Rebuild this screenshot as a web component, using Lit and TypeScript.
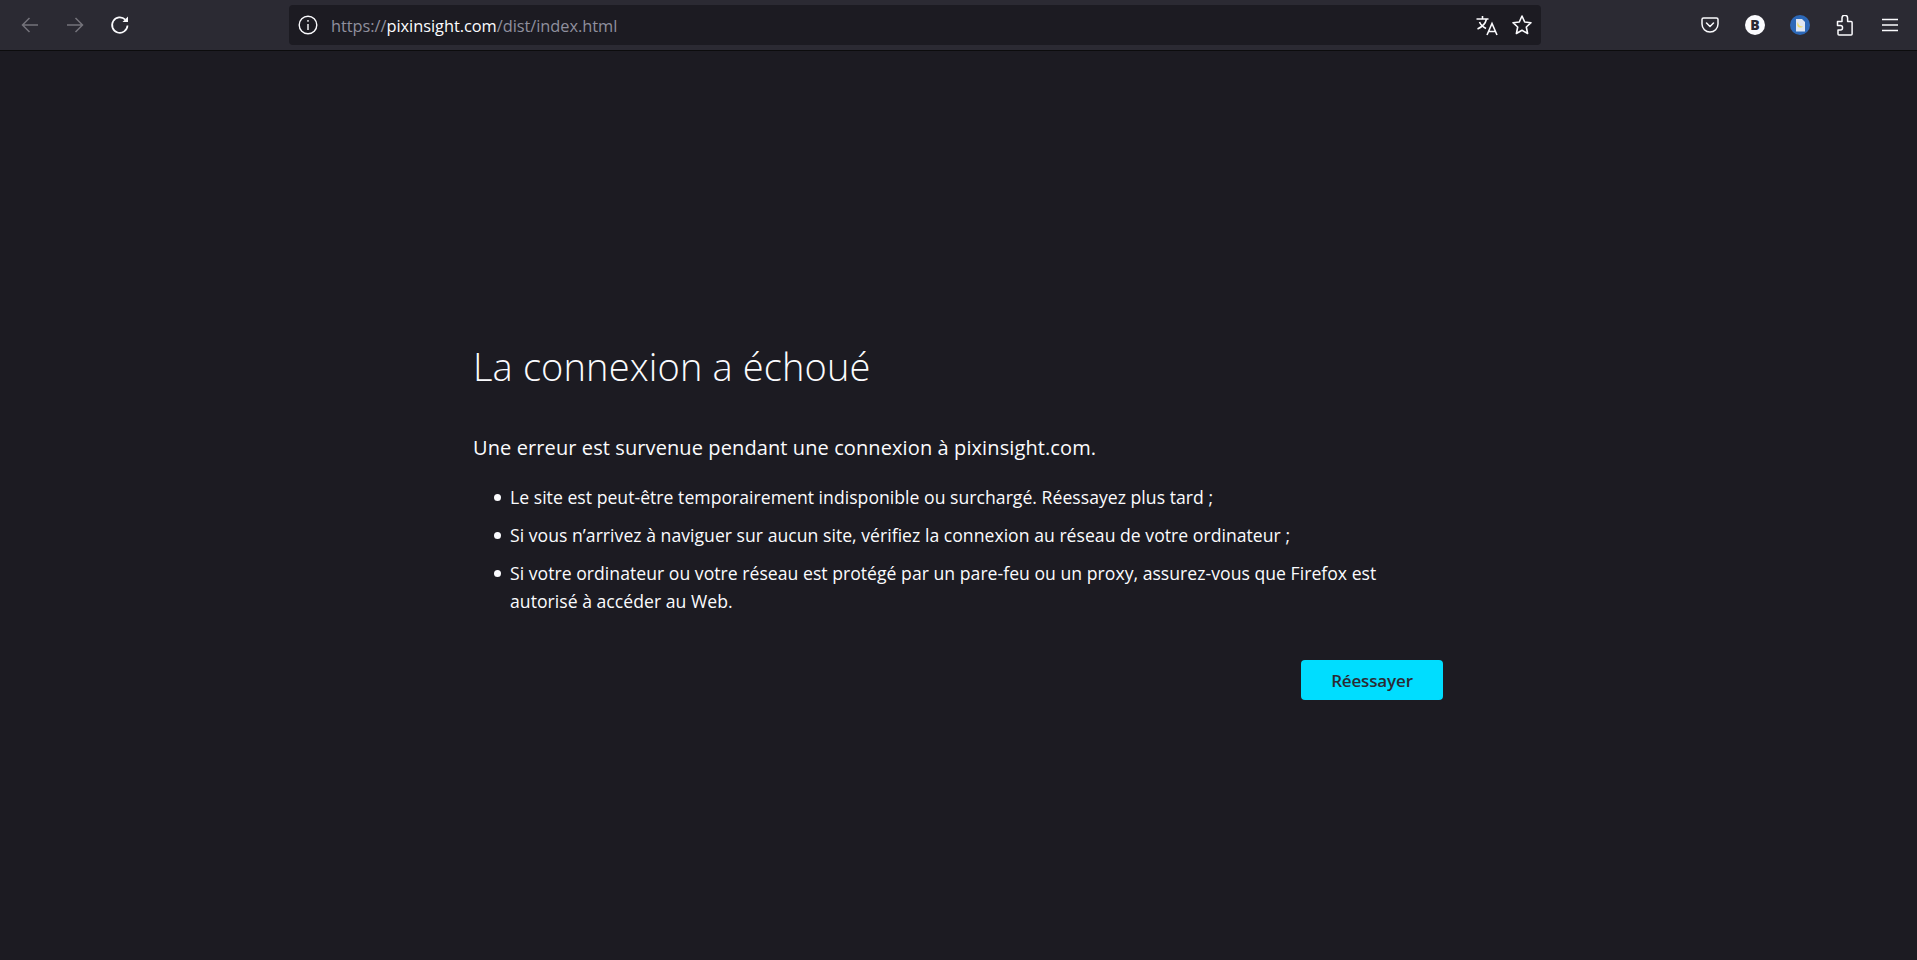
import { LitElement, html, css } from "lit";
import { customElement } from "lit/decorators.js";

@customElement("app-root")
export class AppRoot extends LitElement {
  static styles = css`
    :host { display: flex; flex-direction: column; height: 960px; background: #1c1b22; color: #fbfbfe; font-family: "Open Sans", "Noto Sans", sans-serif; overflow: hidden; }
    .bar { height: 50px; flex: none; background: #2b2a33; border-bottom: 1px solid #0c0c0d; display: flex; align-items: center; box-sizing: content-box; }
    .left { width: 289px; display: flex; padding-left: 12px; gap: 9px; box-sizing: border-box; flex: none; }
    .ic { width: 36px; height: 36px; display: flex; align-items: center; justify-content: center; flex: none; }
    svg { display: block; }
    .url { width: 1252px; height: 40px; background: #1c1b22; border-radius: 4px; flex: none; display: flex; align-items: center; box-sizing: border-box; padding: 0 8px 0 9px; }
    .url-text { margin-left: 13px; font-size: 16.4px; color: #8f8f9d; flex: 1; letter-spacing: -0.05px; }
    .url-text b { color: #fbfbfe; font-weight: 400; }
    .url-ic { display: flex; gap: 13px; align-items: center; }
    .right { flex: 1; display: flex; justify-content: flex-end; gap: 9px; padding-right: 9px; }
    .main { flex: 1; display: flex; flex-direction: column; padding: 290px 0 0 473px; }
    .box { width: 970px; }
    h1 { margin: 0; font-size: 38px; font-weight: 300; line-height: 50px; letter-spacing: 0.14px; }
    .lead { margin: 43px 0 0; font-size: 20px; line-height: 28px; letter-spacing: 0.1px; }
    ul { margin: 21px 0 0; padding: 0 0 0 21px; font-size: 17.6px; line-height: 28px; letter-spacing: 0.03px; list-style: none; }
    li { margin-bottom: 10px; display: flex; gap: 9px; }
    li::before { content: ""; flex: none; width: 7px; height: 7px; border-radius: 50%; background: #fbfbfe; margin-top: 11px; }
    .act { display: flex; justify-content: flex-end; margin-top: 45px; }
    button { width: 142px; height: 40px; border: 0; border-radius: 4px; background: #00ddff; color: #2b2a33; font: 600 17px "Open Sans", sans-serif; letter-spacing: -0.15px; padding: 0; }
  `;

  render() {
    return html`
      <div class="bar">
        <div class="left">
          <div class="ic"><svg width="20" height="20" viewBox="0 0 20 20" fill="none" stroke="#74737b" stroke-width="1.5"><path d="M18 10H2.500M9.500 3l-7 7 7 7"/></svg></div>
          <div class="ic"><svg width="20" height="20" viewBox="0 0 20 20" fill="none" stroke="#74737b" stroke-width="1.5"><path d="M2 10h15.500M10.500 3l7 7-7 7"/></svg></div>
          <div class="ic"><svg width="20" height="20" viewBox="0 0 20 20" fill="none" stroke="#fbfbfe" stroke-width="1.7"><path d="M17.500 10.500a7.700 7.700 0 1 1-2.200-5.800"/><path d="M18 1.500v5.500h-5.500z" fill="#fbfbfe" stroke="none"/></svg></div>
        </div>
        <div class="url">
          <svg width="20" height="20" viewBox="0 0 20 20" fill="none" stroke="#fbfbfe" stroke-width="1.4"><circle cx="10" cy="10" r="8.800"/><path d="M10 9v6M10 5v1.800"/></svg>
          <div class="url-text">https://<b>pixinsight.com</b>/dist/index.html</div>
          <div class="url-ic">
            <svg width="22" height="21" viewBox="0 0 22 21" fill="none" stroke="#fbfbfe" stroke-width="1.6"><path d="M0.500 4h12M6.500 1v3M10.500 4c-1 4.500-4.500 8-9 10M3.500 7c1 2.500 3.500 5 6.500 6.500M11 20l5-11.500L21 20M12.500 16.500h7"/></svg>
            <svg width="22" height="22" viewBox="0 0 22 22" fill="none" stroke="#fbfbfe" stroke-width="1.6" stroke-linejoin="round"><path d="M11 2l2.700 6 6.300.7-4.700 4.300 1.300 6.500L11 16.200 5.400 19.500 6.700 13 2 8.700 8.300 8z"/></svg>
          </div>
        </div>
        <div class="right">
          <div class="ic"><svg width="18" height="18" viewBox="0 0 18 18" fill="none" stroke="#fbfbfe" stroke-width="1.5" stroke-linejoin="round"><path d="M2.500 2h13A1.500 1.500 0 0 1 17 3.500V8a8 8 0 0 1-16 0V3.500A1.500 1.500 0 0 1 2.500 2z"/><path d="M5.500 7L9 10.500 12.500 7" stroke-linecap="round"/></svg></div>
          <div class="ic"><svg width="20" height="20" viewBox="0 0 20 20"><circle cx="10" cy="10" r="10" fill="#fbfbfe"/><text x="10" y="15" text-anchor="middle" font-family="Open Sans" font-weight="800" font-size="14" fill="#2b2a33">B</text></svg></div>
          <div class="ic"><svg width="20" height="20" viewBox="0 0 20 20"><circle cx="10" cy="10" r="10" fill="#2c68b8"/><path d="M6 4h6l3 3v9.500H6z" fill="#dfe6f2"/><path d="M8 7c0 3 2 4.500 5 4.500-1 1.500-4.500 1.500-5.500-.5-.5-1.500-.2-3 .5-4z" fill="#efdc6a"/></svg></div>
          <div class="ic"><svg width="18" height="21" viewBox="0 0 18 21" fill="none" stroke="#fbfbfe" stroke-width="1.5" stroke-linejoin="round"><path d="M1.500 6.500H6V3a2.800 2.800 0 0 1 5.600 0v3.500h3.500a1 1 0 0 1 1 1V19a1 1 0 0 1-1 1H3a1 1 0 0 1-1-1v-4h2.500a2 2 0 0 0 2-2v-.500a2 2 0 0 0-2-2H1.500z"/></svg></div>
          <div class="ic"><svg width="16" height="14" viewBox="0 0 16 14" fill="none" stroke="#fbfbfe" stroke-width="1.5"><path d="M0 1.500h16M0 7h16M0 12.500h16"/></svg></div>
        </div>
      </div>
      <div class="main">
        <div class="box">
          <h1>La connexion a échoué</h1>
          <p class="lead">Une erreur est survenue pendant une connexion à pixinsight.com.</p>
          <ul>
            <li>Le site est peut-être temporairement indisponible ou surchargé. Réessayez plus tard ;</li>
            <li>Si vous n’arrivez à naviguer sur aucun site, vérifiez la connexion au réseau de votre ordinateur ;</li>
            <li>Si votre ordinateur ou votre réseau est protégé par un pare-feu ou un proxy, assurez-vous que Firefox est autorisé à accéder au Web.</li>
          </ul>
          <div class="act"><button>Réessayer</button></div>
        </div>
      </div>
    `;
  }
}
